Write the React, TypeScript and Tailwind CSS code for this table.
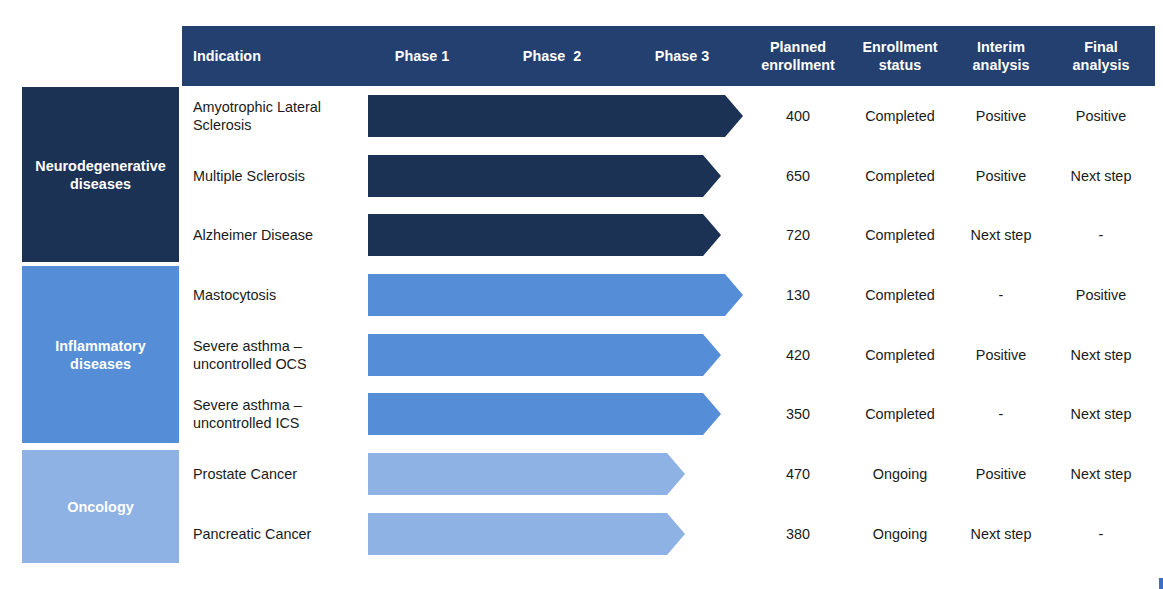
import React from "react";

const NAVY = "#1b3255";
const MID = "#558dd6";
const LIGHT = "#8db2e3";

type Row = {
  name: string[];
  len: number;
  color: string;
  planned: string;
  status: string;
  interim: string;
  final: string;
};

const rows: Row[] = [
  { name: ["Amyotrophic Lateral", "Sclerosis"], len: 375, color: NAVY, planned: "400", status: "Completed", interim: "Positive", final: "Positive" },
  { name: ["Multiple Sclerosis"], len: 353, color: NAVY, planned: "650", status: "Completed", interim: "Positive", final: "Next step" },
  { name: ["Alzheimer Disease"], len: 353, color: NAVY, planned: "720", status: "Completed", interim: "Next step", final: "-" },
  { name: ["Mastocytosis"], len: 375, color: MID, planned: "130", status: "Completed", interim: "-", final: "Positive" },
  { name: ["Severe asthma \u2013", "uncontrolled OCS"], len: 353, color: MID, planned: "420", status: "Completed", interim: "Positive", final: "Next step" },
  { name: ["Severe asthma \u2013", "uncontrolled ICS"], len: 353, color: MID, planned: "350", status: "Completed", interim: "-", final: "Next step" },
  { name: ["Prostate Cancer"], len: 317, color: LIGHT, planned: "470", status: "Ongoing", interim: "Positive", final: "Next step" },
  { name: ["Pancreatic Cancer"], len: 317, color: LIGHT, planned: "380", status: "Ongoing", interim: "Next step", final: "-" },
];

function Arrow({ len, color }: { len: number; color: string }) {
  const tip = 18;
  return (
    <svg width={len} height={42} viewBox={`0 0 ${len} 42`} className="block">
      <polygon points={`0,0 ${len - tip},0 ${len},21 ${len - tip},42 0,42`} fill={color} />
    </svg>
  );
}

export default function App() {
  return (
    <div className="relative w-[1163px] h-[589px] overflow-hidden bg-white pt-[26px] pl-[22px] font-['Liberation_Sans',Arial,sans-serif] text-[14.4px] leading-[18px] text-[#1a1a1a]">
      {/* Header */}
      <div className="ml-[160px] flex h-[60px] w-[973px] items-center bg-[#234070] font-bold text-white">
        <div className="w-[175px] pl-[11px]">Indication</div>
        <div className="w-[130px] text-center">Phase 1</div>
        <div className="w-[130px] text-center whitespace-pre">Phase  2</div>
        <div className="w-[130px] text-center">Phase 3</div>
        <div className="w-[102px] text-center">Planned<br />enrollment</div>
        <div className="w-[102px] text-center">Enrollment<br />status</div>
        <div className="w-[100px] text-center">Interim<br />analysis</div>
        <div className="w-[100px] text-center">Final<br />analysis</div>
      </div>

      {/* Body */}
      <div className="flex">
        <div className="flex w-[157px] flex-col pt-[1px] font-bold text-white">
          <div className="flex h-[175px] items-center justify-center text-center" style={{ background: NAVY }}>
            Neurodegenerative<br />diseases
          </div>
          <div className="mt-[4px] flex h-[177px] items-center justify-center text-center" style={{ background: MID }}>
            Inflammatory<br />diseases
          </div>
          <div className="mt-[7px] flex h-[113px] items-center justify-center text-center" style={{ background: LIGHT }}>
            Oncology
          </div>
        </div>

        <div className="ml-[3px] flex flex-col">
          {rows.map((r, i) => (
            <div key={i} className="flex h-[59.7px] items-center">
              <div className="w-[175px] pl-[11px]">
                {r.name.map((l, j) => (
                  <div key={j}>{l}</div>
                ))}
              </div>
              <div className="w-[390px] pl-[11px]">
                <Arrow len={r.len} color={r.color} />
              </div>
              <div className="w-[102px] text-center">{r.planned}</div>
              <div className="w-[102px] text-center">{r.status}</div>
              <div className="w-[100px] text-center">{r.interim}</div>
              <div className="w-[100px] text-center">{r.final}</div>
            </div>
          ))}
        </div>
      </div>

      <div className="absolute bottom-0 right-0 h-[11px] w-[4px] bg-[#3a6fc8]" />
    </div>
  );
}
